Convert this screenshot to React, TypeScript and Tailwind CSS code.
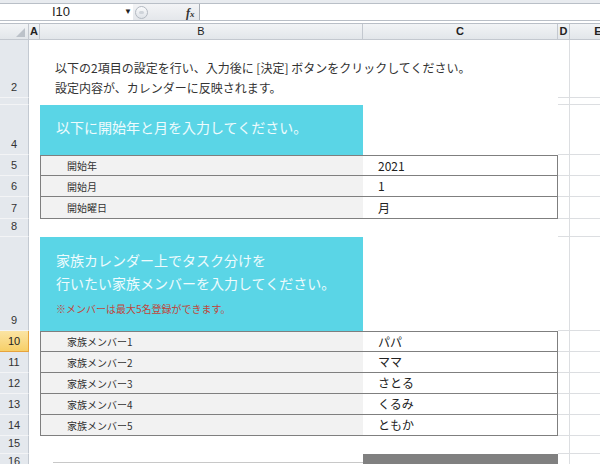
import React from "react";

const jp = "font-['Noto_Sans_CJK_JP',sans-serif]";
const ui = "font-['Liberation_Sans',sans-serif]";

function Row({
  n,
  h,
  sel,
  b,
  c,
  bClass = "",
  cClass = "",
}: {
  n: string;
  h: string;
  sel?: boolean;
  b?: React.ReactNode;
  c?: React.ReactNode;
  bClass?: string;
  cClass?: string;
}) {
  return (
    <div className={`flex shrink-0 ${h}`}>
      <div
        className={
          sel
            ? `w-[29px] shrink-0 flex items-end justify-center pb-[3px] text-[11px] leading-[13px] text-[#222] bg-linear-to-b from-[#fbe4a3] to-[#f7cf66] border-b border-r border-[#e7a33c] ${ui}`
            : `w-[29px] shrink-0 flex items-end justify-center pb-[3px] text-[11px] leading-[13px] text-[#333] bg-[#e4e8ed] border-b border-b-[#f3f4f6] border-r border-r-[#c3c9d1] ${ui}`
        }
      >
        {n}
      </div>
      <div className="w-[11px] shrink-0 bg-white" />
      <div className={`w-[323px] shrink-0 relative z-10 ${bClass}`}>{b}</div>
      <div className={`w-[195px] shrink-0 ${cClass}`}>{c}</div>
      <div className="w-[12px] shrink-0 bg-white border-r border-b border-[#dcdee1]" />
      <div className="flex-1 bg-white border-b border-[#dcdee1]" />
    </div>
  );
}

const labelB = `h-full bg-[#f2f2f2] border-l border-b border-[#7f7f7f] flex items-center pl-[26px] text-[10px] text-[#333] ${jp}`;
const valueC = `h-full bg-white border-b border-r border-[#7f7f7f] flex items-center pl-[15px] text-[12px] text-[#222] ${jp}`;

export default function App() {
  const members = ["パパ", "ママ", "さとる", "くるみ", "ともか"];
  const start = [
    ["開始年", "2021"],
    ["開始月", "1"],
    ["開始曜日", "月"],
  ];
  return (
    <div className="w-[600px] h-[464px] overflow-hidden bg-white flex flex-col">
      {/* formula bar */}
      <div className="h-[4px] shrink-0 bg-[#e8ebef] border-b border-[#b9bfc7]" />
      <div className="h-[17px] shrink-0 flex border-b border-[#b9bfc7]">
        <div className={`w-[133px] shrink-0 bg-white relative flex items-center text-[13px] text-[#222] ${ui}`}>
          <span className="ml-[52px]">I10</span>
          <span className="absolute left-[124px] top-[2px] text-[8px] text-[#222]">▼</span>
        </div>
        <div className="w-[66px] shrink-0 bg-linear-to-b from-[#f3f4f6] to-[#e4e7eb] flex items-center relative">
          <div className="w-[13px] h-[13px] rounded-full border border-[#b3b9c1] bg-linear-to-b from-[#fafbfc] to-[#dfe3e8] ml-[2px] flex items-center justify-center">
            <div className="w-[5px] h-[3px] rounded-full bg-[#cfd4da]" />
          </div>
          <span className="absolute left-[53px] top-[0px] text-[12px] italic font-bold text-[#333] font-['Liberation_Serif',serif]">
            f<span className="text-[9px]">x</span>
          </span>
        </div>
        <div className="flex-1 bg-white border-l border-[#a7adb5]" />
      </div>
      <div className="h-[3px] shrink-0 bg-white border-b border-[#b9bfc7]" />

      {/* column headers */}
      <div className={`h-[16px] shrink-0 flex text-[11px] text-[#222] ${ui}`}>
        <div className="w-[29px] shrink-0 bg-linear-to-b from-[#f2f4f6] to-[#e2e6ea] border-r border-b border-[#c3c8cf] relative">
          <svg className="absolute right-[3px] bottom-[2px]" width="9" height="9" viewBox="0 0 9 9">
            <polygon points="9,0 9,9 0,9" fill="#bcc2c9" />
          </svg>
        </div>
        <div className="w-[11px] shrink-0 bg-linear-to-b from-[#f2f4f6] to-[#e2e6ea] border-r border-b border-[#c3c8cf] flex items-center justify-center font-bold">
          A
        </div>
        <div className="w-[323px] shrink-0 bg-linear-to-b from-[#f2f4f6] to-[#e2e6ea] border-r border-b border-[#c3c8cf] flex items-center justify-center">
          B
        </div>
        <div className="w-[195px] shrink-0 bg-linear-to-b from-[#f2f4f6] to-[#e2e6ea] border-r border-b border-[#c3c8cf] flex items-center justify-center font-bold">
          C
        </div>
        <div className="w-[12px] shrink-0 bg-linear-to-b from-[#f2f4f6] to-[#e2e6ea] border-r border-b border-[#c3c8cf] flex items-center justify-center font-bold">
          D
        </div>
        <div className="w-[56px] shrink-0 bg-linear-to-b from-[#f2f4f6] to-[#e2e6ea] border-b border-[#c3c8cf] flex items-center justify-center font-bold">
          E
        </div>
      </div>

      {/* sheet */}
      <Row
        n="2"
        h="h-[58px]"
        bClass="bg-white"
        cClass="bg-white"
        b={
          <div className={`h-full flex flex-col justify-end pl-[15px] text-[12px] leading-[20px] text-[#333] whitespace-nowrap ${jp}`}>
            <div>以下の2項目の設定を行い、入力後に [決定] ボタンをクリックしてください。</div>
            <div>設定内容が、カレンダーに反映されます。</div>
          </div>
        }
      />
      <Row n="" h="h-[7px]" bClass="bg-white" cClass="bg-white" />
      <Row
        n="4"
        h="h-[50px]"
        bClass="bg-[#5ad5e6]"
        cClass="bg-white"
        b={
          <div className={`pt-[12px] pl-[16px] text-[14px] leading-[20px] text-white/90 whitespace-nowrap ${jp}`}>
            以下に開始年と月を入力してください。
          </div>
        }
      />
      {start.map(([l, v], i) => (
        <Row
          key={l}
          n={String(i + 5)}
          h={i === 2 ? "h-[22px]" : "h-[21px]"}
          b={<div className={`${labelB} ${i === 0 ? "border-t" : ""}`}>{l}</div>}
          c={<div className={`${valueC} ${i === 0 ? "border-t" : ""}`}>{v}</div>}
        />
      ))}
      <Row n="8" h="h-[18px]" bClass="bg-white" cClass="bg-white" />
      <Row
        n="9"
        h="h-[94px]"
        bClass="bg-[#5ad5e6]"
        cClass="bg-white"
        b={
          <div className={`pt-[12px] pl-[16px] whitespace-nowrap ${jp}`}>
            <div className="text-[14px] leading-[23px] text-white/90">家族カレンダー上でタスク分けを</div>
            <div className="text-[14px] leading-[23px] text-white/90">行いたい家族メンバーを入力してください。</div>
            <div className="mt-[7px] text-[10px] leading-[14px] text-[#c0453a]">※メンバーは最大5名登録ができます。</div>
          </div>
        }
      />
      {members.map((m, i) => (
        <Row
          key={m}
          n={String(i + 10)}
          sel={i === 0}
          h="h-[21px]"
          b={<div className={`${labelB} ${i === 0 ? "border-t" : ""}`}>家族メンバー{i + 1}</div>}
          c={<div className={`${valueC} ${i === 0 ? "border-t" : ""}`}>{m}</div>}
        />
      ))}
      <Row n="15" h="h-[18px]" bClass="bg-white" cClass="bg-white" />
      <Row
        n="16"
        h="h-[18px]"
        bClass="bg-white"
        cClass="bg-[#808080]"
        b={<div className="mt-[8px] ml-[13px] border-t border-[#c8c8c8]" />}
      />
    </div>
  );
}
